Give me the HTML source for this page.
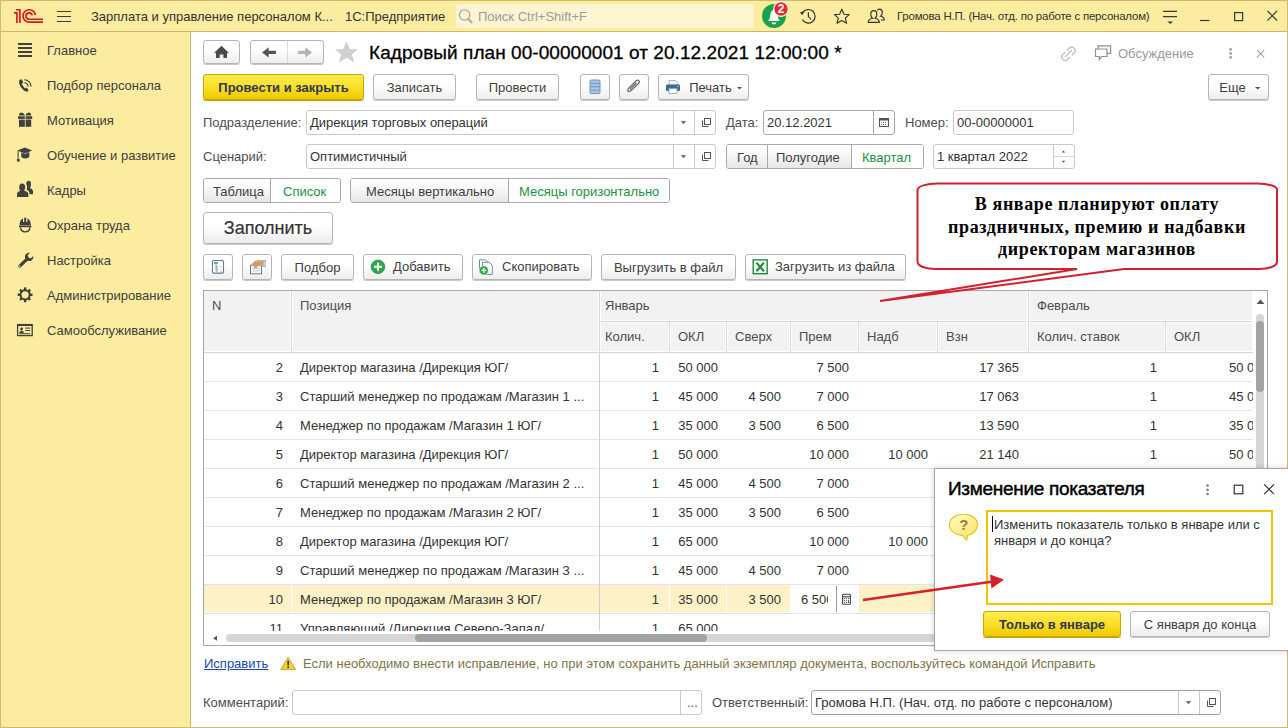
<!DOCTYPE html><html><head><meta charset="utf-8"><style>
*{box-sizing:border-box;margin:0;padding:0}
html,body{width:1288px;height:728px;overflow:hidden;background:#fff}
body{position:relative;font-family:"Liberation Sans",sans-serif;font-size:13px;color:#404040}
.a{position:absolute;white-space:nowrap}
.t{position:absolute;white-space:nowrap;line-height:15px}
#frame{position:absolute;left:0;top:0;width:1288px;height:728px;border:1px solid #CDBB6E;pointer-events:none;z-index:2}
#hdr{position:absolute;left:0;top:0;width:1288px;height:32px;background:#FBEC9F;border-bottom:1px solid #C9B86E}
#side{position:absolute;left:0;top:32px;width:191px;height:696px;background:#FBEC9F;border-right:1px solid #CDBB6E}
.mi{position:absolute;left:47px;color:#404040;font-size:13px;line-height:15px;white-space:nowrap}
.btn{position:absolute;height:26px;border:1px solid #B5B5B5;border-radius:3px;background:linear-gradient(#FFFFFF 0%,#FFFFFF 40%,#EDEDED 100%);box-shadow:0 1px 0 #C8C8C8;text-align:center;line-height:26px;color:#404040;font-size:13px;white-space:nowrap}
.ybtn{position:absolute;height:26px;border:1px solid #C8A800;border-radius:3px;background:linear-gradient(#FFEB4D 0%,#FADF2A 50%,#F0C900 100%);box-shadow:0 1px 0 #BFA300;text-align:center;line-height:26px;color:#2F3850;font-weight:bold;font-size:13px;white-space:nowrap}
.inp{position:absolute;height:25px;border:1px solid #C9C9C9;border-radius:3px;background:#fff;line-height:23px;padding-left:3px;color:#333;white-space:nowrap;overflow:hidden}
.lbl{position:absolute;color:#4D4D4D;line-height:15px;white-space:nowrap}
.grn{color:#1B9143}
.vl{position:absolute;width:1px;background:#D8D8D8}
.hl{position:absolute;height:1px;background:#E4E4E4}
.th{position:absolute;color:#4D4D4D;line-height:15px;white-space:nowrap}
.td{position:absolute;color:#333;line-height:15px;white-space:nowrap}
.r{text-align:right}
</style></head><body>
<div id="hdr"></div><div id="side"></div>
<svg class="a" style="left:0;top:0" width="1288" height="340">
<g fill="none" stroke="#D6171F" stroke-width="1.65">
 <path d="M14 12.9 H16.9 V23"/><path d="M16.1 9.75 H19.9 V23"/>
 <path d="M35.4 15.2 A6.2 6.2 0 1 0 29.2 22.15 H43"/>
 <path d="M32.2 15.4 A3.15 3.15 0 1 0 29.15 19.2 H43"/>
</g>
<g stroke="#3A3A3A" stroke-width="1.2">
 <path d="M57 11.5 H71 M57 16.5 H71 M57 21.5 H71"/>
 <path d="M1163 11.3 H1177 M1163 16.6 H1177"/>
 <path d="M1200 20.5 H1209.5"/>
 <path d="M1267.5 11 L1277 20.5 M1277 11 L1267.5 20.5"/>
</g>
<path d="M1167.5 21.5 H1173 L1170.25 24Z" fill="#3A3A3A"/>
<rect x="1234.6" y="12.6" width="8" height="8" fill="none" stroke="#3A3A3A" stroke-width="1.2"/>

<!-- bell -->
<circle cx="774" cy="16" r="12" fill="#17A24A"/>
<path d="M768 21 Q770 19.5 770.3 15 Q770.8 10 774 10 Q777.2 10 777.7 15 Q778 19.5 780 21Z" fill="#fff"/>
<path d="M771.5 22.5 H776.5 Q775.8 24.5 774 24.5 Q772.2 24.5 771.5 22.5Z" fill="#fff"/>
<circle cx="781" cy="9" r="7.3" fill="#E8262C" stroke="#fff" stroke-width="1.2"/>
<text x="781" y="13.3" font-family="Liberation Sans" font-weight="bold" font-size="12" fill="#fff" text-anchor="middle">2</text>
<!-- history -->
<g fill="none" stroke="#333" stroke-width="1.2">
 <path d="M802.3 19.5 A6.8 6.8 0 1 0 802.6 12.6"/>
 <path d="M808.4 12.3 V16.6 L811.2 19.4"/>
</g>
<path d="M800 12.2 L804.6 11.2 L802.2 15.3Z" fill="#333"/>
<!-- star outline -->
<path d="M841.8 9.2 L844 14.2 L849.2 14.6 L845.3 18.2 L846.6 23.3 L841.8 20.6 L837 23.3 L838.3 18.2 L834.4 14.6 L839.6 14.2Z" fill="none" stroke="#333" stroke-width="1.15" stroke-linejoin="round"/>
<!-- users -->
<g fill="none" stroke="#333" stroke-width="1.15">
 <path d="M873.8 10.6 Q870.8 10.6 870.8 14 Q870.8 17 872.5 18.2 Q868.3 19.2 868.3 22.3 H879.3 Q879.3 19.2 875.1 18.2 Q876.8 17 876.8 14 Q876.8 10.6 873.8 10.6Z"/>
 <path d="M877.2 10.5 Q877.9 9.1 879.5 9.1 Q882.3 9.1 882.3 12.3 Q882.3 15 880.7 16.2 Q884.3 17 884.3 20 H881"/>
</g>
<!-- sidebar icons -->
<g fill="#404040">
 <rect x="18" y="43" width="14" height="2"/><rect x="18" y="47" width="14" height="2"/><rect x="18" y="51" width="14" height="2"/><rect x="18" y="55" width="14" height="2"/>
</g>
<!-- phone -->
<path d="M20.3 79.6 Q18.6 80.5 19 83 Q19.8 86.8 23.6 90.3 Q25.8 92 27.6 91.4 L28.6 90.3 L26.6 87.6 L25 88.4 Q22.8 86.4 21.8 83.8 L23.3 82.7 L22 79.4Z" fill="#404040"/>
<g fill="none" stroke="#404040" stroke-width="1.1">
 <path d="M24.4 82.8 A3.6 3.6 0 0 1 28 86.6"/>
 <path d="M24.4 79.8 A6.6 6.6 0 0 1 31 86.6"/>
</g>
<!-- gift -->
<g fill="#404040">
 <path d="M19 115.5 Q19 112.6 21.5 112.6 Q23.8 112.6 25 115.5Z"/>
 <path d="M25.3 115.5 Q26.5 112.6 28.8 112.6 Q31.2 112.6 31.2 115.5Z"/>
 <rect x="18" y="116.3" width="6.8" height="2.6"/><rect x="25.6" y="116.3" width="6.6" height="2.6"/>
 <rect x="19" y="119.6" width="5.8" height="7.2"/><rect x="25.6" y="119.6" width="5.6" height="7.2"/>
</g>
<!-- graduation cap -->
<g fill="#404040">
 <path d="M17.3 150.6 L24.8 147.6 L32.2 150.6 L24.8 153.6Z"/>
 <path d="M21.3 152.3 L24.8 153.9 L29.3 152.1 V156.6 Q29.3 158.4 25.2 158.4 Q21.3 158.4 21.3 156.6Z"/>
 <rect x="17.6" y="151" width="1" height="8"/><rect x="17" y="159" width="2.6" height="2.6"/>
</g>
<!-- users solid -->
<g fill="#404040">
 <path d="M26.2 183.8 Q26.4 180.8 28.6 180.8 Q31 180.8 31 184.2 Q31 187.2 29.6 188 Q32.8 188.8 33 191.3 V194.2 H29.6 Q29.4 190.8 26.6 189.8 Q27.2 188.4 27 185.8Z"/>
 <path d="M22.2 183.4 Q25.2 183.4 25.2 187.2 Q25.2 190 23.8 190.8 Q28.4 191.4 28.4 194.6 V196.9 H17 V194.6 Q17 191.4 20.6 190.8 Q19.2 190 19.2 187.2 Q19.2 183.4 22.2 183.4Z"/>
</g>
<!-- helmet -->
<g fill="#404040">
 <path d="M19.6 225.4 Q19.6 219.6 23 218.4 V222 H24.2 V217.8 H26.2 V222 H27.4 V218.4 Q30.8 219.6 30.8 225.4Z"/>
 <rect x="19" y="225.8" width="12.4" height="1.4"/>
</g>
<path d="M20.4 227.4 Q20.8 231.8 25.2 231.8 Q29.6 231.8 30 227.4" fill="none" stroke="#404040" stroke-width="1.3"/>
<!-- wrench -->
<path d="M18.5 265.2 L25.3 258.4 Q24.2 254.8 27 253.2 Q28.6 252.4 30 252.8 L27.6 255.2 L28.6 257.4 L30.8 258.4 L33.2 256 Q33.6 257.6 32.6 259.2 Q31 261.8 27.6 260.8 L20.6 267.4 Q19.4 268 18.6 267.2 Q18 266.2 18.5 265.2Z" fill="#404040"/>
<circle cx="19.6" cy="266.2" r="0.8" fill="#FBEC9F"/>
<!-- gear -->
<g transform="translate(25.1 294.8)">
 <circle r="4.6" fill="none" stroke="#404040" stroke-width="2"/>
 <g fill="#404040">
  <rect x="-1.2" y="-7.4" width="2.4" height="3"/><rect x="-1.2" y="4.4" width="2.4" height="3"/>
  <rect x="-7.4" y="-1.2" width="3" height="2.4"/><rect x="4.4" y="-1.2" width="3" height="2.4"/>
  <g transform="rotate(45)"><rect x="-1.2" y="-7.2" width="2.4" height="3"/><rect x="-1.2" y="4.2" width="2.4" height="3"/><rect x="-7.2" y="-1.2" width="3" height="2.4"/><rect x="4.2" y="-1.2" width="3" height="2.4"/></g>
 </g>
</g>
<!-- id card -->
<g fill="none" stroke="#404040" stroke-width="1.3"><rect x="17.6" y="324.6" width="14.6" height="11"/></g>
<g fill="#404040">
 <rect x="17.6" y="324.2" width="14.6" height="1.8"/>
 <circle cx="21.6" cy="329" r="1.4"/><path d="M19.3 333 Q19.5 330.8 21.6 330.8 Q23.7 330.8 23.9 333Z"/>
 <rect x="25.2" y="327.6" width="5" height="1"/><rect x="25.2" y="330" width="5" height="1"/><rect x="19.2" y="333.2" width="11" height="1"/>
</g>
</svg>
<div class="t" style="left:91px;top:9px;color:#333">Зарплата и управление персоналом К...</div>
<div class="t" style="left:345px;top:9px;color:#333">1С:Предприятие</div>
<div class="a" style="left:456px;top:4px;width:298px;height:24px;background:#FDF5D2;border-radius:3px"></div>
<div class="t" style="left:478px;top:9px;color:#9B9B9B">Поиск Ctrl+Shift+F</div>
<svg class="a" style="left:456px;top:4px" width="24" height="24"><g transform="translate(-456 -4)"><circle cx="464.6" cy="15" r="5.2" fill="none" stroke="#AAAAAA" stroke-width="1.3"/><path d="M468.2 18.8 L471.6 22.4" stroke="#AAAAAA" stroke-width="2.2" stroke-linecap="round"/></g></svg>
<div class="a" style="left:897px;top:9px;color:#333;font-size:11.5px;line-height:14px;letter-spacing:-0.23px">Громова Н.П. (Нач. отд. по работе с персоналом)</div>
<div class="mi" style="top:43px">Главное</div>
<div class="mi" style="top:78px">Подбор персонала</div>
<div class="mi" style="top:113px">Мотивация</div>
<div class="mi" style="top:148px">Обучение и развитие</div>
<div class="mi" style="top:183px">Кадры</div>
<div class="mi" style="top:218px">Охрана труда</div>
<div class="mi" style="top:253px">Настройка</div>
<div class="mi" style="top:288px">Администрирование</div>
<div class="mi" style="top:323px">Самообслуживание</div>
<div class="btn" style="left:203px;top:40px;width:37px;height:24px"></div>
<div class="btn" style="left:250px;top:40px;width:74px;height:24px"></div>
<div class="t" style="left:369px;top:42px;font-size:19px;letter-spacing:0.06px;color:#000;line-height:21px;-webkit-text-stroke:0.3px #000">Кадровый план 00-00000001 от 20.12.2021 12:00:00 *</div>
<div class="t" style="left:1118px;top:46px;color:#9A9A9A">Обсуждение</div>
<div class="ybtn" style="left:203px;top:74px;width:161px">Провести и закрыть</div>
<div class="btn" style="left:373px;top:74px;width:83px">Записать</div>
<div class="btn" style="left:476px;top:74px;width:83px">Провести</div>
<div class="btn" style="left:580px;top:74px;width:30px"></div>
<div class="btn" style="left:619px;top:74px;width:30px"></div>
<div class="btn" style="left:658px;top:74px;width:91px;padding-left:14px">Печать</div>
<div class="btn" style="left:1208px;top:74px;width:61px;padding-right:12px">Еще</div>
<div class="lbl" style="left:203px;top:115px">Подразделение:</div>
<div class="inp" style="left:306px;top:110px;width:410px">Дирекция торговых операций</div>
<div class="lbl" style="left:726px;top:115px">Дата:</div>
<div class="inp" style="left:763px;top:110px;width:132px;border-color:#A9A9A9">20.12.2021</div>
<div class="lbl" style="left:905px;top:115px">Номер:</div>
<div class="inp" style="left:953px;top:110px;width:121px">00-00000001</div>
<div class="lbl" style="left:203px;top:149px">Сценарий:</div>
<div class="inp" style="left:306px;top:144px;width:410px">Оптимистичный</div>
<div class="inp" style="left:933px;top:144px;width:142px">1 квартал 2022</div>
<div class="btn" style="left:203px;top:212px;width:130px;height:32px;line-height:30px;font-size:18px;color:#333;-webkit-text-stroke:0.2px #333">Заполнить</div>
<div class="btn" style="left:203px;top:254px;width:30px"></div>
<div class="btn" style="left:242px;top:254px;width:30px"></div>
<div class="btn" style="left:281px;top:254px;width:73px">Подбор</div>
<div class="btn" style="left:363px;top:254px;width:100px"></div>
<div class="btn" style="left:472px;top:254px;width:120px"></div>
<div class="btn" style="left:601px;top:254px;width:135px">Выгрузить в файл</div>
<div class="btn" style="left:745px;top:254px;width:161px"></div>
<div class="a" style="left:203px;top:178px;width:138px;height:25px;border:1px solid #A9A9A9;border-radius:3px;background:#fff;overflow:hidden">
<div class="a" style="left:0px;top:0;width:67px;height:23px;background:linear-gradient(#FFFFFF 0%,#FAFAFA 35%,#E6E6E6 100%)"></div>
<div class="a" style="left:66px;top:0;width:1px;height:23px;background:#A9A9A9"></div>
<div class="t" style="left:9px;top:5px;color:#404040">Таблица</div>
<div class="a" style="left:67px;top:0;width:70px;height:23px;background:#fff"></div>
<div class="t" style="left:79px;top:5px;color:#1B9143">Список</div>
</div>
<div class="a" style="left:350px;top:178px;width:320px;height:25px;border:1px solid #A9A9A9;border-radius:3px;background:#fff;overflow:hidden">
<div class="a" style="left:0px;top:0;width:158px;height:23px;background:linear-gradient(#FFFFFF 0%,#FAFAFA 35%,#E6E6E6 100%)"></div>
<div class="a" style="left:157px;top:0;width:1px;height:23px;background:#A9A9A9"></div>
<div class="t" style="left:15px;top:5px;color:#404040">Месяцы вертикально</div>
<div class="a" style="left:158px;top:0;width:161px;height:23px;background:#fff"></div>
<div class="t" style="left:168px;top:5px;color:#1B9143">Месяцы горизонтально</div>
</div>
<div class="a" style="left:726px;top:144px;width:198px;height:25px;border:1px solid #A9A9A9;border-radius:3px;background:#fff;overflow:hidden">
<div class="a" style="left:0px;top:0;width:41px;height:23px;background:linear-gradient(#FFFFFF 0%,#FAFAFA 35%,#E6E6E6 100%)"></div>
<div class="a" style="left:40px;top:0;width:1px;height:23px;background:#A9A9A9"></div>
<div class="t" style="left:10px;top:5px;color:#404040">Год</div>
<div class="a" style="left:41px;top:0;width:84px;height:23px;background:linear-gradient(#FFFFFF 0%,#FAFAFA 35%,#E6E6E6 100%)"></div>
<div class="a" style="left:124px;top:0;width:1px;height:23px;background:#A9A9A9"></div>
<div class="t" style="left:49px;top:5px;color:#404040">Полугодие</div>
<div class="a" style="left:125px;top:0;width:72px;height:23px;background:#fff"></div>
<div class="t" style="left:135px;top:5px;color:#1B9143">Квартал</div>
</div>
<div class="t" style="left:393px;top:259px;color:#404040">Добавить</div>
<div class="t" style="left:502px;top:259px;color:#404040">Скопировать</div>
<div class="t" style="left:775px;top:259px;color:#404040">Загрузить из файла</div>
<div class="a" style="left:203px;top:290px;width:1065px;height:356px;border:1px solid #A6A6A6;background:#fff"></div>
<div class="a" style="left:204px;top:291px;width:1049px;height:61px;background:#F2F2F2"></div>
<div class="a" style="left:204px;top:351px;width:1049px;height:1px;background:#FFFFFF"></div>
<div class="a" style="left:204px;top:352px;width:1049px;height:1px;background:#D4D4D4"></div>
<div class="a" style="left:600px;top:320px;width:653px;height:3px;background:#FFFFFF"></div>
<div class="a" style="left:600px;top:321px;width:653px;height:1px;background:#D4D4D4"></div>
<div class="a" style="left:290px;top:291px;width:3px;height:61px;background:#fff"></div>
<div class="vl" style="left:291px;top:291px;height:61px"></div>
<div class="a" style="left:598px;top:291px;width:3px;height:61px;background:#fff"></div>
<div class="vl" style="left:599px;top:291px;height:61px"></div>
<div class="a" style="left:1027px;top:291px;width:3px;height:61px;background:#fff"></div>
<div class="vl" style="left:1028px;top:291px;height:61px"></div>
<div class="a" style="left:668px;top:322px;width:3px;height:30px;background:#fff"></div>
<div class="vl" style="left:669px;top:322px;height:30px"></div>
<div class="a" style="left:725px;top:322px;width:3px;height:30px;background:#fff"></div>
<div class="vl" style="left:726px;top:322px;height:30px"></div>
<div class="a" style="left:789px;top:322px;width:3px;height:30px;background:#fff"></div>
<div class="vl" style="left:790px;top:322px;height:30px"></div>
<div class="a" style="left:857px;top:322px;width:3px;height:30px;background:#fff"></div>
<div class="vl" style="left:858px;top:322px;height:30px"></div>
<div class="a" style="left:936px;top:322px;width:3px;height:30px;background:#fff"></div>
<div class="vl" style="left:937px;top:322px;height:30px"></div>
<div class="a" style="left:1164px;top:322px;width:3px;height:30px;background:#fff"></div>
<div class="vl" style="left:1165px;top:322px;height:30px"></div>
<div class="a" style="left:1252px;top:291px;width:1px;height:61px;background:#fff"></div>
<div class="th" style="left:212px;top:298px">N</div>
<div class="th" style="left:300px;top:298px">Позиция</div>
<div class="th" style="left:605px;top:298px">Январь</div>
<div class="th" style="left:1037px;top:298px">Февраль</div>
<div class="th" style="left:605px;top:329px">Колич.</div>
<div class="th" style="left:678px;top:329px">ОКЛ</div>
<div class="th" style="left:735px;top:329px">Сверх</div>
<div class="th" style="left:799px;top:329px">Прем</div>
<div class="th" style="left:867px;top:329px">Надб</div>
<div class="th" style="left:946px;top:329px">Взн</div>
<div class="th" style="left:1037px;top:329px">Колич. ставок</div>
<div class="th" style="left:1174px;top:329px">ОКЛ</div>
<div class="a" style="left:204px;top:353px;width:1049px;height:278px;overflow:hidden">
<div class="a" style="left:0px;top:232px;width:87px;height:27px;background:#FDF1C7"></div>
<div class="a" style="left:88px;top:232px;width:307px;height:27px;background:#FDF1C7"></div>
<div class="a" style="left:396px;top:232px;width:69px;height:27px;background:#FDF1C7"></div>
<div class="a" style="left:466px;top:232px;width:56px;height:27px;background:#FDF1C7"></div>
<div class="a" style="left:523px;top:232px;width:63px;height:27px;background:#FDF1C7"></div>
<div class="a" style="left:654px;top:232px;width:395px;height:27px;background:#FDF1C7"></div>
<div class="hl" style="left:0px;top:28px;width:1049px"></div>
<div class="hl" style="left:0px;top:57px;width:1049px"></div>
<div class="hl" style="left:0px;top:86px;width:1049px"></div>
<div class="hl" style="left:0px;top:115px;width:1049px"></div>
<div class="hl" style="left:0px;top:144px;width:1049px"></div>
<div class="hl" style="left:0px;top:173px;width:1049px"></div>
<div class="hl" style="left:0px;top:202px;width:1049px"></div>
<div class="hl" style="left:0px;top:231px;width:1049px"></div>
<div class="hl" style="left:0px;top:260px;width:1049px"></div>
<div class="hl" style="left:0px;top:289px;width:1049px"></div>
<div class="vl" style="left:395px;top:0px;height:278px;background:#CFCFCF"></div>
<div class="td r" style="left:-121px;width:200px;top:7px">2</div>
<div class="td" style="left:96px;top:7px">Директор магазина /Дирекция ЮГ/</div>
<div class="td r" style="left:255px;width:200px;top:7px">1</div>
<div class="td r" style="left:314px;width:200px;top:7px">50 000</div>
<div class="td r" style="left:445px;width:200px;top:7px">7 500</div>
<div class="td r" style="left:615px;width:200px;top:7px">17 365</div>
<div class="td r" style="left:753px;width:200px;top:7px">1</div>
<div class="td" style="left:1025px;top:7px">50 0</div>
<div class="td r" style="left:-121px;width:200px;top:36px">3</div>
<div class="td" style="left:96px;top:36px">Старший менеджер по продажам /Магазин 1 ...</div>
<div class="td r" style="left:255px;width:200px;top:36px">1</div>
<div class="td r" style="left:314px;width:200px;top:36px">45 000</div>
<div class="td r" style="left:377px;width:200px;top:36px">4 500</div>
<div class="td r" style="left:445px;width:200px;top:36px">7 000</div>
<div class="td r" style="left:615px;width:200px;top:36px">17 063</div>
<div class="td r" style="left:753px;width:200px;top:36px">1</div>
<div class="td" style="left:1025px;top:36px">45 0</div>
<div class="td r" style="left:-121px;width:200px;top:65px">4</div>
<div class="td" style="left:96px;top:65px">Менеджер по продажам /Магазин 1 ЮГ/</div>
<div class="td r" style="left:255px;width:200px;top:65px">1</div>
<div class="td r" style="left:314px;width:200px;top:65px">35 000</div>
<div class="td r" style="left:377px;width:200px;top:65px">3 500</div>
<div class="td r" style="left:445px;width:200px;top:65px">6 500</div>
<div class="td r" style="left:615px;width:200px;top:65px">13 590</div>
<div class="td r" style="left:753px;width:200px;top:65px">1</div>
<div class="td" style="left:1025px;top:65px">35 0</div>
<div class="td r" style="left:-121px;width:200px;top:94px">5</div>
<div class="td" style="left:96px;top:94px">Директор магазина /Дирекция ЮГ/</div>
<div class="td r" style="left:255px;width:200px;top:94px">1</div>
<div class="td r" style="left:314px;width:200px;top:94px">50 000</div>
<div class="td r" style="left:445px;width:200px;top:94px">10 000</div>
<div class="td r" style="left:524px;width:200px;top:94px">10 000</div>
<div class="td r" style="left:615px;width:200px;top:94px">21 140</div>
<div class="td r" style="left:753px;width:200px;top:94px">1</div>
<div class="td" style="left:1025px;top:94px">50 0</div>
<div class="td r" style="left:-121px;width:200px;top:123px">6</div>
<div class="td" style="left:96px;top:123px">Старший менеджер по продажам /Магазин 2 ...</div>
<div class="td r" style="left:255px;width:200px;top:123px">1</div>
<div class="td r" style="left:314px;width:200px;top:123px">45 000</div>
<div class="td r" style="left:377px;width:200px;top:123px">4 500</div>
<div class="td r" style="left:445px;width:200px;top:123px">7 000</div>
<div class="td r" style="left:-121px;width:200px;top:152px">7</div>
<div class="td" style="left:96px;top:152px">Менеджер по продажам /Магазин 2 ЮГ/</div>
<div class="td r" style="left:255px;width:200px;top:152px">1</div>
<div class="td r" style="left:314px;width:200px;top:152px">35 000</div>
<div class="td r" style="left:377px;width:200px;top:152px">3 500</div>
<div class="td r" style="left:445px;width:200px;top:152px">6 500</div>
<div class="td r" style="left:-121px;width:200px;top:181px">8</div>
<div class="td" style="left:96px;top:181px">Директор магазина /Дирекция ЮГ/</div>
<div class="td r" style="left:255px;width:200px;top:181px">1</div>
<div class="td r" style="left:314px;width:200px;top:181px">65 000</div>
<div class="td r" style="left:445px;width:200px;top:181px">10 000</div>
<div class="td r" style="left:524px;width:200px;top:181px">10 000</div>
<div class="td r" style="left:-121px;width:200px;top:210px">9</div>
<div class="td" style="left:96px;top:210px">Старший менеджер по продажам /Магазин 3 ...</div>
<div class="td r" style="left:255px;width:200px;top:210px">1</div>
<div class="td r" style="left:314px;width:200px;top:210px">45 000</div>
<div class="td r" style="left:377px;width:200px;top:210px">4 500</div>
<div class="td r" style="left:445px;width:200px;top:210px">7 000</div>
<div class="td r" style="left:-121px;width:200px;top:239px">10</div>
<div class="td" style="left:96px;top:239px">Менеджер по продажам /Магазин 3 ЮГ/</div>
<div class="td r" style="left:255px;width:200px;top:239px">1</div>
<div class="td r" style="left:314px;width:200px;top:239px">35 000</div>
<div class="td r" style="left:377px;width:200px;top:239px">3 500</div>
<div class="td r" style="left:-121px;width:200px;top:268px">11</div>
<div class="td" style="left:96px;top:268px">Управляющий /Дирекция Северо-Запад/</div>
<div class="td r" style="left:255px;width:200px;top:268px">1</div>
<div class="td r" style="left:314px;width:200px;top:268px">65 000</div>
</div>
<div class="a" style="left:1256px;top:314px;width:8px;height:330px;background:#D6D6D6;border-radius:4px"></div>
<div class="a" style="left:1256px;top:321px;width:8px;height:71px;background:#A3A3A3;border-radius:4px"></div>
<svg class="a" style="left:1256px;top:298px" width="9" height="7"><path d="M0.5 6 L4.5 1.5 L8.5 6Z" fill="#555"/></svg>
<div class="a" style="left:226px;top:634px;width:1027px;height:8px;background:#D6D6D6;border-radius:4px"></div>
<div class="a" style="left:415px;top:634px;width:292px;height:8px;background:#A3A3A3;border-radius:4px"></div>
<svg class="a" style="left:211px;top:634px" width="7" height="9"><path d="M6 1.8 L2 4.3 L6 6.8Z" fill="#555"/></svg>
<div class="a" style="left:790px;top:585px;width:69px;height:27px;background:#fff"></div>
<div class="a" style="left:790px;top:592px;width:38px;height:15px;overflow:hidden"><div class="td" style="left:11px;top:0">6 500</div></div>
<div class="a" style="left:836px;top:586px;width:1px;height:26px;background:#9A9A9A"></div>
<div class="t" style="left:204px;top:656px;color:#1849B0;text-decoration:underline">Исправить</div>
<div class="t" style="left:303px;top:656px;color:#7D7446">Если необходимо внести исправление, но при этом сохранить данный экземпляр документа, воспользуйтесь командой Исправить</div>
<div class="lbl" style="left:203px;top:695px">Комментарий:</div>
<div class="inp" style="left:292px;top:690px;width:410px"></div>
<div class="a" style="left:680px;top:691px;width:1px;height:23px;background:#C9C9C9"></div>
<div class="t" style="left:687px;top:695px;color:#555">...</div>
<div class="lbl" style="left:712px;top:695px">Ответственный:</div>
<div class="inp" style="left:811px;top:690px;width:410px;border-color:#A3A3A3">Громова Н.П. (Нач. отд. по работе с персоналом)</div>
<svg class="a" style="left:0;top:0" width="1288" height="728">
<!-- home -->
<path d="M221.5 45.8 L229 53 H227 V58 H223.4 V54.6 H219.7 V58 H216 V53 H214 Z" fill="#4A4A4A"/>
<!-- nav divider -->
<rect x="287" y="41" width="1" height="22" fill="#D9D9D9"/>
<path d="M262 52.4 L268.7 47.3 V50.8 H276 V54 H268.7 V57.6Z" fill="#555"/>
<path d="M312 52.4 L305.3 47.3 V50.8 H298 V54 H305.3 V57.6Z" fill="#B3B3B3"/>
<!-- big star -->
<path d="M346.5 41.3 L349.8 49.2 L358 49.2 L351.8 54.5 L354.4 62.6 L346.5 57.7 L338.6 62.6 L341.2 54.5 L335 49.2 L343.2 49.2Z" fill="#CFCFCF"/>
<!-- link icon -->
<g fill="none" stroke="#C2C2C2" stroke-width="1.4" stroke-linecap="round">
 <path d="M1067.3 50.3 L1069.8 47.8 Q1071.6 46 1073.6 47.8 L1074.5 48.7 Q1076.3 50.6 1074.5 52.5 L1072.2 54.8"/>
 <path d="M1069.6 57.4 L1067.2 59.8 Q1065.3 61.6 1063.4 59.8 L1062.5 58.9 Q1060.7 57 1062.5 55.1 L1064.8 52.8"/>
 <path d="M1065.4 56.5 L1071.4 50.5"/>
</g>
<!-- discussion icon -->
<g fill="none" stroke="#8F8F8F" stroke-width="1.2">
 <path d="M1095.5 49 H1107 V56.5 H1101.8 L1099.3 59.5 V56.5 H1095.5Z"/>
 <path d="M1098 49 V45.8 H1110.6 V53.4 H1107"/>
</g>
<!-- kebab -->
<g fill="#9A9A9A"><circle cx="1230.6" cy="49.4" r="1.3"/><circle cx="1230.6" cy="53.4" r="1.3"/><circle cx="1230.6" cy="57.4" r="1.3"/></g>
<!-- close title -->
<path d="M1257 50.2 L1264.2 57.4 M1264.2 50.2 L1257 57.4" stroke="#A0A0A0" stroke-width="1.1"/>
<!-- stack icon -->
<g>
 <rect x="590" y="80" width="10" height="13.6" rx="1.2" fill="#A8C6E2" stroke="#6C97C0" stroke-width="1"/>
 <path d="M590.5 83.4 H599.5 M590.5 86.8 H599.5 M590.5 90.2 H599.5" stroke="#6C97C0" stroke-width="1"/>
</g>
<!-- paperclip -->
<path d="M638.2 83.6 L631.4 90.4 Q629.4 92.4 628.2 91.2 Q627 90 629 88 L636.2 80.8 Q637.6 79.4 638.8 80.6 Q640 81.8 638.6 83.2 L632.2 89.6 Q631.4 90.4 630.8 89.8 Q630.2 89.2 631 88.4 L636.4 83" fill="none" stroke="#6A6A6A" stroke-width="1.3"/>
<!-- printer -->
<g>
 <path d="M669 80.5 H675.5 L677.6 82.6 V85 H669Z" fill="#fff" stroke="#8AA0B8" stroke-width="0.8"/>
 <rect x="666" y="84.5" width="14" height="6.5" rx="1.2" fill="#3A6A99"/>
 <rect x="669" y="88.5" width="8" height="5" fill="#fff" stroke="#8AA0B8" stroke-width="0.8"/>
 <circle cx="678" cy="86.4" r="0.6" fill="#fff"/>
</g>
<path d="M737 87 H742 L739.5 89.6Z" fill="#555"/>
<path d="M1255 87 H1260.4 L1257.7 89.6Z" fill="#555"/>
<!-- input buttons: Подразделение -->
<rect x="673" y="111" width="1" height="23" fill="#C9C9C9"/>
<rect x="694" y="111" width="1" height="23" fill="#C9C9C9"/>
<path d="M680.8 121.2 H686.2 L683.5 124Z" fill="#555"/>
<g fill="none" stroke="#555" stroke-width="1"><path d="M702.5 120.5 V126.5 H708.5"/><rect x="704.5" y="118.5" width="6" height="6"/></g>
<!-- Сценарий -->
<rect x="673" y="145" width="1" height="23" fill="#C9C9C9"/>
<rect x="694" y="145" width="1" height="23" fill="#C9C9C9"/>
<path d="M680.8 155.2 H686.2 L683.5 158Z" fill="#555"/>
<g fill="none" stroke="#555" stroke-width="1"><path d="M702.5 154.5 V160.5 H708.5"/><rect x="704.5" y="152.5" width="6" height="6"/></g>
<!-- date calendar -->
<rect x="873" y="111" width="1" height="23" fill="#A9A9A9"/>
<g><rect x="879.5" y="118.5" width="9" height="8" fill="none" stroke="#555" stroke-width="1"/><rect x="879.5" y="118.5" width="9" height="2" fill="#555"/>
<path d="M881 122.5 H887 M881 124.5 H887" stroke="#555" stroke-width="0.8" stroke-dasharray="1 1"/></g>
<!-- spin -->
<rect x="1053" y="145" width="1" height="23" fill="#C9C9C9"/>
<rect x="1054" y="156" width="20" height="1" fill="#D8D8D8"/>
<path d="M1061.8 152.6 H1065.2 L1063.5 150.6Z" fill="#555"/>
<path d="M1061.8 160.8 H1065.2 L1063.5 162.8Z" fill="#555"/>
<!-- toolbar icon1 -->
<rect x="212.5" y="260.5" width="11" height="12.6" rx="1" fill="#fff" stroke="#627D96" stroke-width="1.1"/>
<rect x="214" y="262" width="4" height="2" fill="#5CB88C"/>
<path d="M216 264 V271 H218 M216 266.8 H218 M216 269 H218" fill="none" stroke="#7A8A9A" stroke-width="0.9"/>
<path d="M221 266 V266.8 M221 268.6 V269.4 M221 271 V271.8" stroke="#7A8A9A" stroke-width="1"/>
<!-- toolbar icon2 -->
<rect x="250.5" y="265.2" width="11" height="8.6" fill="#fff" stroke="#627D96" stroke-width="1"/>
<path d="M252.5 268.5 H259.5 M252.5 270.8 H259.5" stroke="#9FB4C8" stroke-width="0.8"/>
<path d="M251.4 264.6 Q253 261.2 256 260.4 Q260 259.6 263 260.8 V265.5 L258 266.5 Q256 268.6 254.6 268 Z" fill="#D9A36E"/>
<path d="M253 265 L256 262 M255 266.5 L259 262.5 M256.5 262.5 L259.5 265.5" stroke="#B57A45" stroke-width="0.6"/>
<rect x="263" y="260.5" width="2.2" height="6" fill="#DCE7F3" stroke="#627D96" stroke-width="0.6"/>
<!-- добавить plus -->
<circle cx="378" cy="266.8" r="6.8" fill="#2EA84D" stroke="#1E8B3A" stroke-width="0.8"/>
<path d="M378 262.8 V270.8 M374 266.8 H382" stroke="#fff" stroke-width="2"/>
<!-- copy icon -->
<path d="M479.5 259.8 H485.5 L488 262.3 V272 H479.5Z" fill="#fff" stroke="#627D96" stroke-width="0.9"/>
<path d="M482.5 262.3 H489.3 L492.3 265.3 V274.4 H482.5Z" fill="#fff" stroke="#627D96" stroke-width="0.9"/>
<circle cx="483.8" cy="270.4" r="4.6" fill="#2EA84D" stroke="#fff" stroke-width="0.6"/>
<path d="M483.8 268 V272.8 M481.4 270.4 H486.2" stroke="#fff" stroke-width="1.4"/>
<!-- excel icon -->
<rect x="753.2" y="259.9" width="14" height="13.8" fill="#fff" stroke="#1E8B3A" stroke-width="1.4"/>
<path d="M756.4 262.6 L763.9 271.2 M763.9 262.6 L756.4 271.2" stroke="#1E8B3A" stroke-width="2.2"/>
<!-- calc icon row 10 -->
<rect x="842.6" y="594.3" width="7.8" height="10" rx="0.8" fill="#fff" stroke="#444" stroke-width="1.1"/>
<path d="M842.6 596.8 H850.4" stroke="#444" stroke-width="1.1"/>
<g fill="#444"><circle cx="844.5" cy="598.6" r="0.55"/><circle cx="846.5" cy="598.6" r="0.55"/><circle cx="848.5" cy="598.6" r="0.55"/>
<circle cx="844.5" cy="600.6" r="0.55"/><circle cx="846.5" cy="600.6" r="0.55"/>
<circle cx="844.5" cy="602.5" r="0.55"/><circle cx="846.5" cy="602.5" r="0.55"/><rect x="848" y="600" width="1" height="3" rx="0.5"/></g>
<!-- warning -->
<path d="M288.2 657.2 L295.6 669.4 H280.8Z" fill="#F2D230" stroke="#B89A1A" stroke-width="0.8" stroke-linejoin="round"/>
<path d="M288.2 660.8 V665.4" stroke="#333" stroke-width="1.6"/>
<rect x="287.4" y="666.4" width="1.6" height="1.6" fill="#333"/>
<!-- comment / responsible buttons -->
<rect x="1178" y="691" width="1" height="23" fill="#C9C9C9"/>
<rect x="1199" y="691" width="1" height="23" fill="#C9C9C9"/>
<path d="M1185.8 701.2 H1191.2 L1188.5 704Z" fill="#555"/>
<g fill="none" stroke="#555" stroke-width="1"><path d="M1207.5 700.5 V706.5 H1213.5"/><rect x="1209.5" y="698.5" width="6" height="6"/></g>
</svg>

<svg class="a" style="left:0;top:0;z-index:3" width="1288" height="728">
<path d="M937.5 183.5 H1257 A20 6 0 0 1 1277 189.5 V262 A18 7 0 0 1 1259 269 H1124 L880 301 L1077 269 H935.5 A18 7 0 0 1 917.5 262 V190 A20 6.5 0 0 1 937.5 183.5Z" fill="#fff" stroke="#D2202F" stroke-width="2"/>
</svg>
<div class="a" style="left:917px;top:193px;width:360px;text-align:center;font-family:&quot;Liberation Serif&quot;,serif;font-weight:bold;font-size:18px;letter-spacing:0.6px;line-height:22.5px;color:#000;z-index:3">В январе планируют оплату<br>праздничных, премию и надбавки<br>директорам магазинов</div>
<div class="a" style="left:934px;top:468px;width:360px;height:183px;background:#fff;border:1px solid #A6A6A6;box-shadow:0 0 6px rgba(0,0,0,0.18);z-index:4"></div>
<div class="t" style="left:948px;top:478px;font-size:19px;line-height:21px;color:#000;letter-spacing:-0.3px;-webkit-text-stroke:0.45px #000;z-index:4">Изменение показателя</div>
<div class="a" style="left:986px;top:510px;width:287px;height:95px;border:2px solid #F2C200;background:#fff;z-index:4"></div>
<div class="t" style="left:994px;top:517px;color:#333;line-height:16px;z-index:4">Изменить показатель только в январе или с<br>января и до конца?</div>
<div class="a" style="left:992px;top:516px;width:1px;height:16px;background:#000;z-index:4"></div>
<div class="ybtn" style="left:983px;top:611px;width:138px;z-index:4">Только в январе</div>
<div class="btn" style="left:1130px;top:611px;width:140px;z-index:4">С января до конца</div>
<svg class="a" style="left:934px;top:468px;z-index:4" width="354" height="183">
<defs><linearGradient id="qg" x1="0" y1="0" x2="1" y2="1"><stop offset="0" stop-color="#FFFBD0"/><stop offset="1" stop-color="#FAE45A"/></linearGradient></defs>
<g transform="translate(-934 -468)">
<path d="M963.5 514.2 C971.6 514.2 977.6 518.8 977.6 524.8 C977.6 530.2 972.6 534.6 967.6 535.3 L966.6 540.3 L962.6 535.4 C955.4 535 949.4 530.6 949.4 524.8 C949.4 518.8 955.4 514.2 963.5 514.2Z" fill="url(#qg)" stroke="#E3BF1A" stroke-width="1.1"/>
<text x="963.8" y="530.2" font-family="Liberation Sans" font-weight="bold" font-size="15" fill="#9C7B36" text-anchor="middle">?</text>
<g fill="#7A7A7A"><circle cx="1207.6" cy="485.6" r="1.25"/><circle cx="1207.6" cy="489.8" r="1.25"/><circle cx="1207.6" cy="494" r="1.25"/></g>
<rect x="1234.2" y="485.2" width="8.6" height="8.6" fill="none" stroke="#333" stroke-width="1.2"/>
<path d="M1264.2 484.4 L1274 494.2 M1274 484.4 L1264.2 494.2" stroke="#333" stroke-width="1.2"/>
</g></svg>
<svg class="a" style="left:0;top:0;z-index:6" width="1288" height="728">
<line x1="863" y1="600" x2="993" y2="581.5" stroke="#D7202A" stroke-width="2.6"/>
<path d="M1004 579.5 L990 574.5 L991.5 588.5Z" fill="#D7202A"/>
</svg>
<div id="frame"></div>
</body></html>
